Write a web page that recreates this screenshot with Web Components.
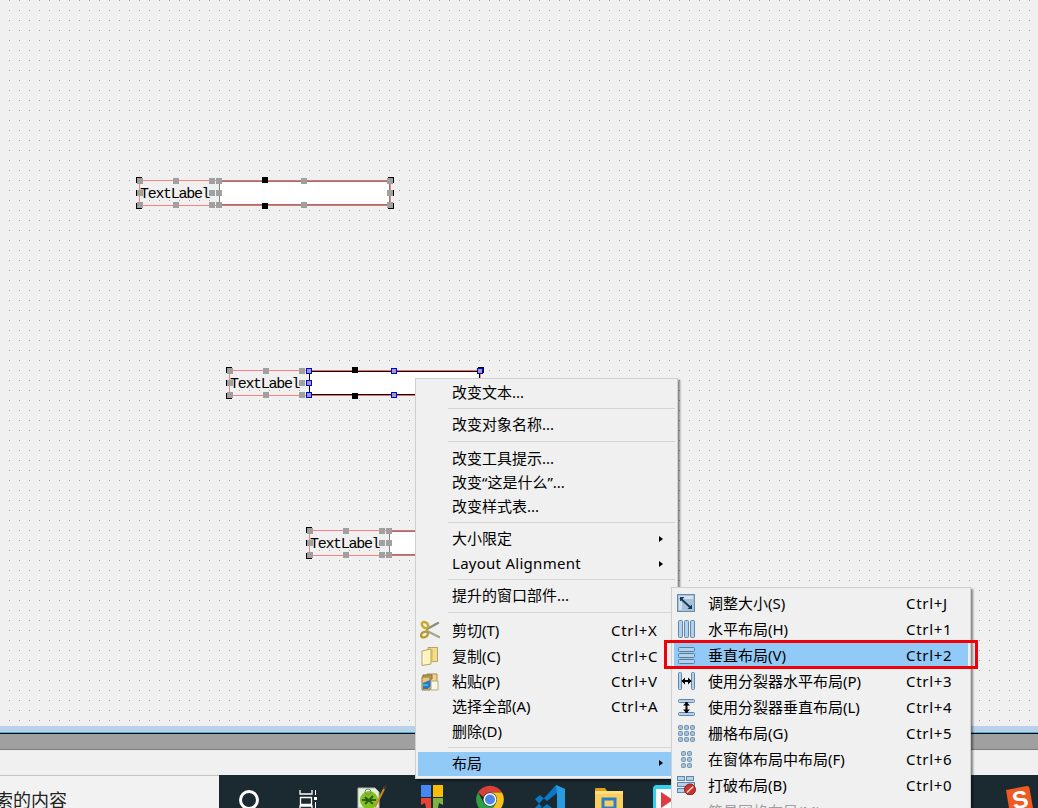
<!DOCTYPE html>
<html lang="zh"><head><meta charset="utf-8"><title>Designer</title>
<style>
html,body{margin:0;padding:0;background:#f0f0f0}
body{width:1038px;height:808px;overflow:hidden;position:relative;font-family:"Noto Sans","Noto Sans CJK SC",sans-serif}
#screen{display:flex;flex-direction:column;height:808px}
</style></head><body>
<div id="screen">
<form-canvas>
  <form-pair style="left:139px;top:180px" state="plain"></form-pair>
  <form-pair style="left:229px;top:370px" state="selected"></form-pair>
  <form-pair style="left:309px;top:530px" state="plain"></form-pair>
</form-canvas>
<dock-strip></dock-strip>
<bottom-bar></bottom-bar>
</div>

<context-menu style="left:415px;top:378px;width:257px">
  <menu-item style="--h:24px;--pb:2px">改变文本...</menu-item>
  <menu-sep style="--h:7px;--at:3px"></menu-sep>
  <menu-item style="--h:25px">改变对象名称...</menu-item>
  <menu-sep style="--h:9px;--at:4px"></menu-sep>
  <menu-item style="--h:24px">改变工具提示...</menu-item>
  <menu-item style="--h:24px">改变“这是什么”...</menu-item>
  <menu-item style="--h:24px">改变样式表...</menu-item>
  <menu-sep style="--h:8px;--at:4px"></menu-sep>
  <menu-item style="--h:25px" arrow>大小限定</menu-item>
  <menu-item style="--h:25px" arrow><span style="letter-spacing:.27px">Layout Alignment</span></menu-item>
  <menu-sep style="--h:7px;--at:3px"></menu-sep>
  <menu-item style="--h:25px">提升的窗口部件...</menu-item>
  <menu-sep style="--h:9px;--at:4px"></menu-sep>
  <menu-item style="--h:26px" shortcut="Ctrl+X"><app-icon slot="icon" name="cut"></app-icon>剪切(T)</menu-item>
  <menu-item style="--h:26px" shortcut="Ctrl+C"><app-icon slot="icon" name="copy"></app-icon>复制(C)</menu-item>
  <menu-item style="--h:25px" shortcut="Ctrl+V"><app-icon slot="icon" name="paste"></app-icon>粘贴(P)</menu-item>
  <menu-item style="--h:25px" shortcut="Ctrl+A">选择全部(A)</menu-item>
  <menu-item style="--h:25px">删除(D)</menu-item>
  <menu-sep style="--h:8px;--at:3px"></menu-sep>
  <menu-item style="--h:24px;--pb:2px" arrow active>布局</menu-item>
</context-menu>

<context-menu style="left:671px;top:587px;width:294px;--tail:14px">
  <menu-item style="--h:26px" shortcut="Ctrl+J"><app-icon slot="icon" name="resize"></app-icon>调整大小(S)</menu-item>
  <menu-item style="--h:26px" shortcut="Ctrl+1"><app-icon slot="icon" name="hbox"></app-icon>水平布局(H)</menu-item>
  <menu-item style="--h:26px" shortcut="Ctrl+2" active><app-icon slot="icon" name="vbox"></app-icon>垂直布局(V)</menu-item>
  <menu-item style="--h:26px" shortcut="Ctrl+3"><app-icon slot="icon" name="hsplit"></app-icon>使用分裂器水平布局(P)</menu-item>
  <menu-item style="--h:26px" shortcut="Ctrl+4"><app-icon slot="icon" name="vsplit"></app-icon>使用分裂器垂直布局(L)</menu-item>
  <menu-item style="--h:26px" shortcut="Ctrl+5"><app-icon slot="icon" name="grid"></app-icon>栅格布局(G)</menu-item>
  <menu-item style="--h:26px" shortcut="Ctrl+6"><app-icon slot="icon" name="form"></app-icon>在窗体布局中布局(F)</menu-item>
  <menu-item style="--h:26px" shortcut="Ctrl+0"><app-icon slot="icon" name="break"></app-icon>打破布局(B)</menu-item>
  <menu-item style="--h:26px" disabled>简易网格布局(M)</menu-item>
</context-menu>

<red-mark style="left:664px;top:640px;width:308px;height:23px"></red-mark>

<script>
const ICONS={
cut:`<g fill="none" stroke-linecap="round"><path d="M7 9 18 3" stroke="#8d8d78" stroke-width="2.400"/><path d="M7 11 19 17" stroke="#a5a590" stroke-width="2.400"/><ellipse cx="5" cy="5" rx="3.600" ry="2.600" transform="rotate(40 5 5)" stroke="#c9a92c" stroke-width="2.400"/><ellipse cx="4.500" cy="14.500" rx="3.600" ry="2.600" transform="rotate(-30 4.500 14.500)" stroke="#b79a28" stroke-width="2.400"/></g>`,
copy:`<path d="M8 1.500h9.500v14H8z" fill="#f3dd8a" stroke="#b9a45a"/><path d="M12 3v11" stroke="#cfb860"/><path d="M2 5l9-2v15l-9 1.500z" fill="#fdf3bf" stroke="#b9a45a"/><path d="M3.500 7v10" stroke="#fff"/>`,
paste:`<path d="M7 2h10v15H7z" fill="#f0d48c" stroke="#a78a4a"/><path d="M3 3h9v4H3z" fill="#caa75a" stroke="#7d6533"/><path d="M2 5h8v13H2z" fill="#e7c877" stroke="#957a3c"/><path d="M3 11l7-3 3 3-5 6H3z" fill="#2e73c9"/><path d="M11 9h7v9h-7z" fill="#fbf7e8" stroke="#b8a878"/><path d="M3 13h5" stroke="#22c0e0" stroke-width="2"/>`,
resize:`<rect x="1.500" y="1.500" width="17" height="17" fill="#a8c0d8" stroke="#6d8aa6"/><path d="M3 3h14v3H6v11H3z" fill="#d4e2ef"/><path d="M4 5 15 15" stroke="#0f3a5a" stroke-width="1.800"/><path d="M4 4h4.500L4 8.500zM16 16h-4.500L16 11.500z" fill="#0f3a5a"/>`,
hbox:`<g fill="#b4d0ea" stroke="#5f86ab"><rect x="2.500" y="1.500" width="4" height="17" rx="1"/><rect x="8.500" y="1.500" width="4" height="17" rx="1"/><rect x="14.500" y="1.500" width="4" height="17" rx="1"/></g>`,
vbox:`<g fill="#b4d0ea" stroke="#5a7c9c"><rect x="2.500" y="2.500" width="16" height="4" rx="1"/><rect x="2.500" y="8.500" width="16" height="4" rx="1"/><rect x="2.500" y="14.500" width="16" height="4" rx="1"/></g>`,
hsplit:`<g fill="#b4d0ea" stroke="#5f86ab"><rect x="2.500" y="1.500" width="3" height="17" rx="1"/><rect x="15.500" y="1.500" width="3" height="17" rx="1"/></g><path d="M6 10h9" stroke="#000" stroke-width="2"/><path d="M5.500 10l3.500-3.500v7zM15.500 10l-3.500-3.500v7z" fill="#000"/>`,
vsplit:`<g fill="#b4d0ea" stroke="#5f86ab"><rect x="2.500" y="2.500" width="16" height="3" rx="1"/><rect x="2.500" y="15.500" width="16" height="3" rx="1"/></g><path d="M10.500 5v11" stroke="#000" stroke-width="2"/><path d="M10.500 5l-3.500 3.500h7zM10.500 16l-3.500-3.500h7z" fill="#000"/>`,
grid:`<g fill="#a6c0d9" stroke="#6d8fb0">${[2.5,8.5,14.5].flatMap(y=>[2.5,8.5,14.5].map(x=>`<rect x="${x}" y="${y}" width="4" height="4" rx="1"/>`)).join('')}</g>`,
form:`<g fill="#a6c0d9" stroke="#6d8fb0">${[2.5,8.5,14.5].flatMap(y=>[5.5,11.5].map(x=>`<rect x="${x}" y="${y}" width="4" height="4" rx="1"/>`)).join('')}</g>`,
break:`<g fill="#b4d0ea" stroke="#5f86ab"><rect x="1.500" y="1.500" width="7" height="4"/><rect x="10.500" y="1.500" width="7" height="4"/><rect x="1.500" y="7.500" width="17" height="4"/><rect x="1.500" y="13.500" width="8" height="4"/></g><circle cx="14" cy="14.500" r="5.500" fill="#c9342c" stroke="#8f1f1a"/><path d="M10.800 17.500l6.500-6" stroke="#f4d5d0" stroke-width="1.600"/>`
};
class AppIcon extends HTMLElement{connectedCallback(){const r=this.attachShadow({mode:'open'});
 r.innerHTML=`<style>:host{display:block;width:20px;height:20px}svg{display:block}</style><svg width="20" height="20" viewBox="0 0 20 20">${ICONS[this.getAttribute('name')]||''}</svg>`;}}
customElements.define('app-icon',AppIcon);

class FormCanvas extends HTMLElement{constructor(){super();const r=this.attachShadow({mode:'open'});
 r.innerHTML=`<style>:host{display:block;flex:1;position:relative;background:#f0f0f0;overflow:hidden}
 svg{position:absolute;inset:0;width:100%;height:100%;display:block}</style>
 <svg aria-hidden="true"><defs><pattern id="d" width="10" height="10" patternUnits="userSpaceOnUse"><rect x="9" y="0" width="1" height="1" fill="#a0a0a0"/></pattern></defs><rect width="100%" height="100%" fill="url(#d)"/></svg><slot></slot>`;}}
customElements.define('form-canvas',FormCanvas);

class FormPair extends HTMLElement{connectedCallback(){const r=this.attachShadow({mode:'open'});
 const sel=this.getAttribute('state')==='selected';
 const H=(x,y,cls)=>`<i class="h ${cls}" style="left:${x}px;top:${y}px"></i>`;
 let h='';
 [-3,10,23].forEach(y=>h+=H(-3,y,'k'));
 (sel?[-3]:[-3,10,23]).forEach(y=>h+=H(249,y,'k'));
 h+=H(123,-3,'k')+H(123,23,'k');
 [-2,10,22].forEach(y=>{[-2,34,70].forEach(x=>{if(!(y===10&&x===34))h+=H(x,y,'g');});});
 const b=sel?'b':'g';
 [-2,10,22].forEach(y=>{[77,162,248].forEach(x=>{if(!(y===10&&x===162))h+=H(x,y,b);});});
 r.innerHTML=`<style>:host{position:absolute;display:block;width:252px;height:26px}
 .box{position:absolute;inset:0;box-sizing:border-box;border:1px solid #ff8080}
 .lab{position:absolute;left:1px;top:0;font:15px/30px "Liberation Mono",monospace;letter-spacing:-1.300px;color:#000;white-space:nowrap;height:26px}
 .edit{position:absolute;left:80px;top:1px;width:171px;height:24px;box-sizing:border-box;background:#fff;border:1px solid ${sel?'#000':'#808080'};box-shadow:0 -1px 0 #ff6464,0 1px 0 #ff6464}
 .h{position:absolute;width:6px;height:6px;box-sizing:border-box}
 .g{background:#a0a0a0}.k{background:#000}.b{background:#a0a0a0;border:1px solid #0000ff}</style>
 <div class="box"></div><div class="edit"></div><div class="lab">TextLabel</div>${h}`;}}
customElements.define('form-pair',FormPair);

class DockStrip extends HTMLElement{constructor(){super();const r=this.attachShadow({mode:'open'});
 r.innerHTML=`<style>:host{display:block;height:49px;flex:none;background:#f0f0f0}
 .a{height:6px;background:#b7d1ea}.b{height:1px;background:#2fb8dc}.c{height:1px;background:#000}.d{height:15px;background:#a0a0a0}.e{height:1px;background:#7c7c7c}</style>
 <div class="a"></div><div class="b"></div><div class="c"></div><div class="d"></div><div class="e"></div>`;}}
customElements.define('dock-strip',DockStrip);

class BottomBar extends HTMLElement{constructor(){super();const r=this.attachShadow({mode:'open'});
 r.innerHTML=`<style>:host{display:flex;height:33px;flex:none;overflow:hidden}
 .search{width:219px;box-sizing:border-box;border-top:1px solid #c4c4c4;background:#f2f2f2;overflow:hidden;font:18px/1 "Noto Sans CJK SC",sans-serif;color:#222;white-space:nowrap}
 .search span{display:block;margin:14px 0 0 -5px}
 .bar{flex:1;background:#1a2a30;display:flex;align-items:flex-start;position:relative}
 svg{display:block;flex:none}
 .s{position:absolute;left:785px;top:0}</style>
 <div class="search"><span>索的内容</span></div>
 <div class="bar">
  <svg width="20" height="33" style="margin-left:20px"><circle cx="10" cy="25" r="8.500" fill="none" stroke="#fff" stroke-width="3"/></svg>
  <svg width="18" height="33" style="margin-left:40px"><path d="M1 15v4h12v-4M1.500 22.500h11v7h-11zM1 33v-2h12v2" fill="none" stroke="#fff" stroke-width="1.300"/><rect x="15" y="22" width="3" height="3" fill="#fff"/><path d="M16.500 15v5M16.500 27v6" stroke="#fff"/></svg>
  <svg width="30" height="33" style="margin-left:40px"><path d="M1 13h17l4 4v16H1z" fill="#e8efe0" stroke="#b0b8a8"/><circle cx="12" cy="25" r="9" fill="#7fc31c"/><path d="M5 25h14M8 22l8 7M16 21l-8 8" stroke="#2d5a14" stroke-width="1.800"/><circle cx="11" cy="17" r="3" fill="none" stroke="#7d8a70"/><path d="M18 32 28 12" stroke="#c98a1c" stroke-width="2"/><path d="M27 14l2-4" stroke="#333" stroke-width="2"/></svg>
  <svg width="22" height="33" style="margin-left:34px"><rect y="10" width="10" height="12" fill="#4688f1"/><rect x="12" y="10" width="10" height="12" fill="#fbbc05"/><path d="M0 23h10v10H5l-1-5-4 2z" fill="#e94335"/><path d="M12 23h10v7l-4-2-1 5h-5z" fill="#7cb342"/></svg>
  <svg width="28" height="33" style="margin-left:33px"><path d="M2 17.500A14 14 0 0 1 26 17.500H14A7 7 0 0 0 7.500 22z" fill="#d9403a"/><path d="M2 17.500A14 14 0 0 0 14 38.500L20 28A7 7 0 0 1 8 28z" fill="#2f9e44"/><path d="M26 17.500A14 14 0 0 1 14 38.500L20 28A7 7 0 0 0 14 17.500z" fill="#f6c21c"/><circle cx="14" cy="24.500" r="6.500" fill="#fff"/><circle cx="14" cy="24.500" r="5" fill="#4a86e8"/></svg>
  <svg width="31" height="33" style="margin-left:30px"><path d="M22 10 31 14V33H23V18L13 26 6 20 1 24 8 32 6 33H1 M8 33 13 29 18 33z" fill="#0a78c8"/><path d="M22 10 31 14V33H23V18z" fill="#2a9be0"/></svg>
  <svg width="28" height="33" style="margin-left:30px"><path d="M0 14q0-1 1-1h9l2 3H0z" fill="#d9a21e"/><rect y="16" width="28" height="17" fill="#fbcf5e"/><rect y="16" width="28" height="3" fill="#ffdc7c"/><rect x="8" y="24" width="12" height="9" fill="none" stroke="#2a7fc9" stroke-width="3"/></svg>
  <svg width="24" height="33" style="margin-left:30px"><rect x="0" y="10" width="30" height="30" rx="4" fill="#33d1ee"/><rect x="3" y="14" width="24" height="22" fill="#fff"/><path d="M8 17 20 25 8 33z" fill="#e03a42"/></svg>
  <svg class="s" width="30" height="33"><path d="M2 15 23 11q2 0 2.500 2L29 33H5z" fill="#f05a22"/><text x="16" y="33" text-anchor="middle" font-family="Liberation Sans" font-weight="700" font-size="24" fill="#fff" transform="rotate(-10 16 24)">S</text></svg>
 </div>`;}}
customElements.define('bottom-bar',BottomBar);

class ContextMenu extends HTMLElement{constructor(){super();const r=this.attachShadow({mode:'open'});
 r.innerHTML=`<style>:host{position:absolute;display:block;box-sizing:content-box;background:#f0f0f0;border:1px solid #cfcfcf;box-shadow:2px 2px 2px rgba(0,0,0,.45);padding:2px;font:15px/1 "Noto Sans","Noto Sans CJK SC",sans-serif;color:#000}</style><slot></slot>`;}}
customElements.define('context-menu',ContextMenu);

class MenuItem extends HTMLElement{connectedCallback(){const r=this.attachShadow({mode:'open'});
 const sc=this.getAttribute('shortcut')||'', ar=this.hasAttribute('arrow');
 r.innerHTML=`<style>:host{display:flex;align-items:center;box-sizing:border-box;height:var(--h,25px);padding-bottom:var(--pb,0);white-space:nowrap}
 :host([active]){background:#91c9f7}:host([disabled]){color:#a0a0a0}
 .i{width:34px;flex:none;box-sizing:border-box;padding-left:2px;display:flex;align-items:center}
 .t{flex:1;min-width:0}
 .s{width:48px;flex:none;letter-spacing:.7px}
 .a{width:var(--tail,16px);flex:none;display:flex;align-items:center}
 .a b{display:block;border-left:4px solid #000;border-top:3.500px solid transparent;border-bottom:3.500px solid transparent}</style>
 <span class="i"><slot name="icon"></slot></span><span class="t"><slot></slot></span>${sc?`<span class="s">${sc}</span>`:''}<span class="a">${ar?'<b></b>':''}</span>`;}}
customElements.define('menu-item',MenuItem);

class MenuSep extends HTMLElement{constructor(){super();const r=this.attachShadow({mode:'open'});
 r.innerHTML=`<style>:host{display:block;height:var(--h,7px);overflow:hidden}div{height:1px;background:#d4d4d4;margin:var(--at,3px) 0 0 30px}</style><div></div>`;}}
customElements.define('menu-sep',MenuSep);

class RedMark extends HTMLElement{constructor(){super();this.attachShadow({mode:'open'}).innerHTML=`<style>:host{position:absolute;display:block;border:3px solid #f00008}</style>`;}}
customElements.define('red-mark',RedMark);
</script>
</body></html>
